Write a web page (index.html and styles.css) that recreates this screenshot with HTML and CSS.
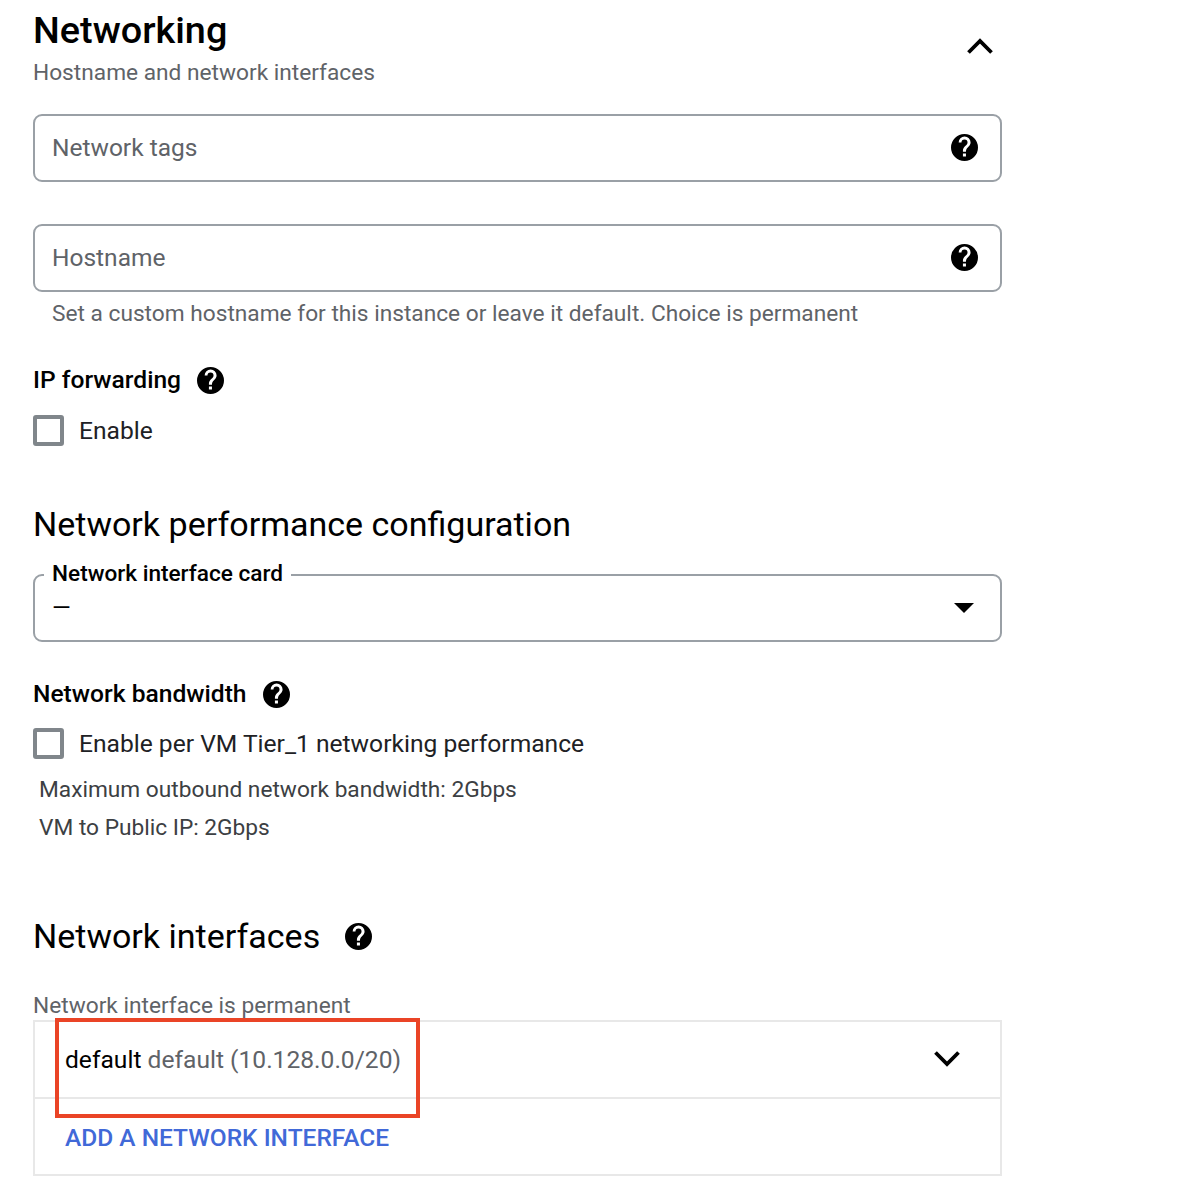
FILE: index.html
```html
<!DOCTYPE html>
<html lang="en">
<head>
    <meta charset="UTF-8">
    <meta name="viewport" content="width=device-width, initial-scale=1.0">
    <title>Networking</title>
    <link rel="stylesheet" href="styles.css">
</head>
<body>
    <div class="container">
        <div class="section-header">
            <div>
                <h1>Networking</h1>
                <p class="subtitle">Hostname and network interfaces</p>
            </div>
            <svg class="chevron chevron-up" viewBox="0 0 26 16"><path d="M1.5 14.5 13 3 24.5 14.5" /></svg>
        </div>

        <div class="field field-tags">
            <span class="placeholder">Network tags</span>
            <svg class="help" viewBox="0 0 24 24"><use href="#help-icon" /></svg>
        </div>

        <div class="field field-hostname">
            <span class="placeholder">Hostname</span>
            <svg class="help" viewBox="0 0 24 24"><use href="#help-icon" /></svg>
        </div>
        <p class="hint">Set a custom hostname for this instance or leave it default. Choice is permanent</p>

        <div class="label-row label-ip">
            <span class="label">IP forwarding</span>
            <svg class="help" viewBox="0 0 24 24"><use href="#help-icon" /></svg>
        </div>
        <div class="check-row check-ip">
            <span class="checkbox"></span>
            <span>Enable</span>
        </div>

        <h2 class="heading-perf">Network performance configuration</h2>

        <div class="field field-select">
            <span class="notch-label">Network interface card</span>
            <span class="select-value">—</span>
            <span class="arrow-down"></span>
        </div>

        <div class="label-row label-bandwidth">
            <span class="label">Network bandwidth</span>
            <svg class="help" viewBox="0 0 24 24"><use href="#help-icon" /></svg>
        </div>
        <div class="check-row check-tier">
            <span class="checkbox"></span>
            <span>Enable per VM Tier_1 networking performance</span>
        </div>
        <div class="bandwidth-info">
            <p>Maximum outbound network bandwidth: 2Gbps</p>
            <p>VM to Public IP: 2Gbps</p>
        </div>

        <div class="interfaces-title">
            <h2>Network interfaces</h2>
            <svg class="help" viewBox="0 0 24 24"><use href="#help-icon" /></svg>
        </div>
        <p class="permanent-note">Network interface is permanent</p>

        <div class="interface-table">
            <div class="interface-row">
                <span><span class="iface-name">default</span> <span class="iface-detail">default (10.128.0.0/20)</span></span>
                <svg class="chevron chevron-down" viewBox="0 0 26 16"><path d="M1.5 1.5 13 13 24.5 1.5" /></svg>
            </div>
            <div class="add-row">ADD A NETWORK INTERFACE</div>
            <div class="highlight"></div>
        </div>
    </div>

    <svg class="icon-defs" aria-hidden="true">
        <symbol id="help-icon" viewBox="0 0 24 24">
            <path d="M12 0a12 12 0 1 0 0 24 12 12 0 0 0 0-24Zm1.3 20h-2.7v-2.7h2.7V20Zm2.8-9.3-1.2 1.2c-1 1-1.6 1.8-1.6 3.8h-2.7v-.7c0-1.5.6-2.8 1.6-3.8l1.7-1.7c.5-.5.8-1.1.8-1.9a2.7 2.7 0 0 0-5.4 0H6.8a5.3 5.3 0 0 1 10.6 0c0 1.2-.5 2.2-1.3 3.1Z" />
        </symbol>
    </svg>
</body>
</html>
```

FILE: styles.css
```css
* {
    margin: 0;
    padding: 0;
    box-sizing: border-box;
}

body {
    font-family: 'Roboto', sans-serif;
    background: white;
    color: #202124;
}

.container {
    width: 1002px;
    padding-left: 33px;
    padding-top: 8px;
    font-size: 24.6px;
}

.icon-defs {
    display: none;
}

.section-header {
    display: flex;
    justify-content: space-between;
    align-items: flex-start;
    height: 106px;
}

h1 {
    color: #000;
    font-size: 37.8px;
    font-weight: 500;
    line-height: 44px;
}

.subtitle {
    color: #5f6368;
    font-size: 22.7px;
    line-height: 32px;
    margin-top: 5px;
}

.chevron {
    width: 26px;
    height: 16px;
    fill: none;
    stroke: #000;
    stroke-width: 3.8;
}

.chevron-up {
    margin-top: 30px;
    margin-right: 9px;
}

.chevron-down {
    margin-right: 40px;
    margin-bottom: 2px;
}

.help {
    width: 27px;
    height: 27px;
    fill: #000;
    flex: none;
}

.field {
    position: relative;
    display: flex;
    align-items: center;
    justify-content: space-between;
    height: 68px;
    border: 2px solid #9aa0a6;
    border-radius: 9px;
    padding: 0 22px 0 17px;
}

.field .help {
    margin-bottom: 2px;
}

.field-hostname {
    margin-top: 42px;
}

.placeholder {
    color: #5f6368;
    font-size: 24.5px;
    margin-bottom: 2px;
}

.hint {
    color: #5f6368;
    font-size: 22.7px;
    line-height: 32px;
    margin-top: 6px;
    padding-left: 19px;
}

.label-row {
    display: flex;
    align-items: center;
    gap: 16px;
}

.label {
    color: #000;
    font-size: 24.6px;
    font-weight: 500;
    line-height: 32px;
}

.label-ip {
    margin-top: 34px;
}

.check-row {
    display: flex;
    align-items: center;
    gap: 15px;
    color: #202124;
    font-size: 24.6px;
    line-height: 30px;
}

.check-ip {
    margin-top: 19px;
}

.checkbox {
    width: 31px;
    height: 31px;
    border: 4px solid #80868b;
    border-radius: 3px;
}

h2 {
    color: #000;
    font-size: 34px;
    font-weight: 400;
    line-height: 44px;
}

.heading-perf {
    margin-top: 56px;
}

.field-select {
    margin-top: 28px;
    padding-right: 26px;
}

.notch-label {
    position: absolute;
    left: 9px;
    top: -15px;
    padding: 0 8px;
    background: white;
    color: #000;
    font-size: 22.6px;
    font-weight: 500;
    line-height: 26px;
}

.select-value {
    color: #000;
    font-size: 24px;
}

.arrow-down {
    width: 0;
    height: 0;
    border-left: 10px solid transparent;
    border-right: 10px solid transparent;
    border-top: 10px solid #000;
}

.label-bandwidth {
    margin-top: 36px;
}

.check-tier {
    margin-top: 18px;
}

.bandwidth-info {
    margin-top: 12px;
    padding-left: 6px;
    color: #3c4043;
    font-size: 22.7px;
    line-height: 38px;
}

.interfaces-title {
    display: flex;
    align-items: center;
    gap: 25px;
    margin-top: 67px;
}

.permanent-note {
    color: #5f6368;
    font-size: 22.7px;
    line-height: 28px;
    margin-top: 34px;
}

.interface-table {
    position: relative;
    border: 2px solid #e8e8e8;
    height: 156px;
}

.interface-row {
    display: flex;
    align-items: center;
    justify-content: space-between;
    height: 77px;
    padding-left: 30px;
    border-bottom: 2px solid #e8e8e8;
}

.iface-name {
    color: #000;
}

.iface-detail {
    color: #5f6368;
}

.add-row {
    padding-left: 30px;
    padding-top: 23px;
    color: #4169d8;
    font-size: 24.5px;
    font-weight: 500;
    line-height: 32px;
}

.highlight {
    position: absolute;
    left: 20px;
    top: -4px;
    width: 365px;
    height: 100px;
    border: 4px solid #ea4426;
}
```
